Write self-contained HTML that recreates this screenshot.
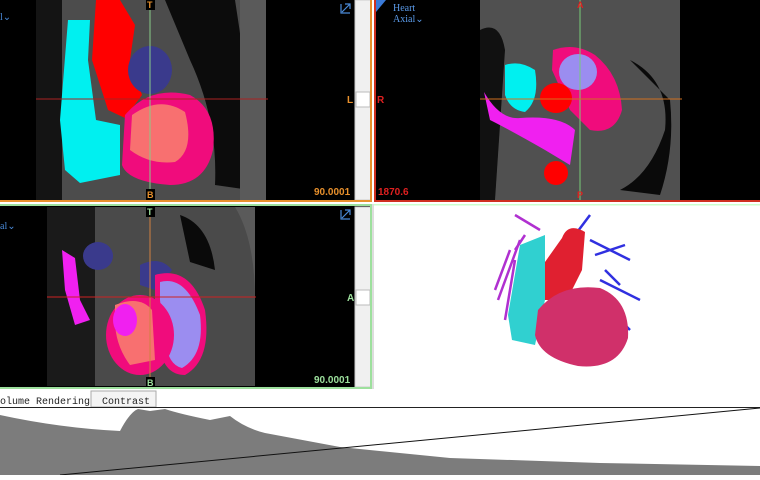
<!DOCTYPE html>
<html><head><style>
body{margin:0;width:760px;height:475px;overflow:hidden;background:#fff;font-family:"Liberation Sans",sans-serif}
</style></head><body>
<svg width="760" height="475" viewBox="0 0 760 475" xmlns="http://www.w3.org/2000/svg">
<!-- TOP LEFT -->
<rect x="0" y="0" width="372" height="202" fill="#000"/>
<path d="M36 0H265V200H36Z" fill="#4c4c4c"/>
<path d="M165 0H235Q245 60 248 120Q252 160 250 190L215 185Q218 120 190 60Z" fill="#0c0c0c"/>
<path d="M36 0H62V200H36Z" fill="#141414"/>
<rect x="240" y="0" width="26" height="200" fill="#5a5a5a"/>
<path d="M68 20H90L88 60L96 120L120 125L120 175L80 183L65 170L60 120Z" fill="#00f0f0"/>
<path d="M96 0H120L135 25L130 60L142 95L125 118L108 110L92 60Z" fill="#f00"/>
<ellipse cx="150" cy="70" rx="22" ry="24" fill="#3a3a8c"/>
<path d="M125 115Q150 85 190 95Q218 110 213 150Q205 185 170 185Q128 182 122 165Z" fill="#f00c7c"/>
<path d="M132 115Q160 95 185 112Q195 150 175 162Q150 165 130 150Z" fill="#f87070"/>
<line x1="150" y1="0" x2="150" y2="200" stroke="#8c8" stroke-width="1"/>
<line x1="36" y1="99" x2="268" y2="99" stroke="#a22" stroke-width="1"/>
<rect x="146" y="0" width="9" height="10" fill="#000"/><text x="147" y="8" font-size="9" font-weight="bold" fill="#e8902c">T</text>
<rect x="146" y="189" width="9" height="11" fill="#000"/><text x="147" y="198" font-size="9" font-weight="bold" fill="#e8902c">B</text>
<text x="347" y="103" font-size="10" font-weight="bold" fill="#e8902c">L</text>
<text x="314" y="195" font-size="10" font-weight="bold" fill="#e8902c">90.0001</text>
<text x="0" y="20" font-size="10" fill="#4a8ad8" font-family="Liberation Serif">l⌄</text>
<path d="M342 12L350 4M345 4H350V9M341 4V13H350" stroke="#4a8ad8" stroke-width="1.2" fill="none"/>
<rect x="355" y="0" width="16" height="200" fill="#f0f0f0" stroke="#ccc"/>
<rect x="356" y="92" width="14" height="15" fill="#fff" stroke="#bbb"/>
<rect x="0" y="200" width="372" height="2" fill="#e8902c"/>
<rect x="370" y="0" width="2" height="202" fill="#e8902c"/>
<!-- TOP RIGHT -->
<rect x="374" y="0" width="386" height="202" fill="#000"/>
<path d="M480 0H680V200H480Z" fill="#505050"/>
<path d="M630 60Q670 80 665 130Q650 175 620 190L660 195Q675 150 670 100Z" fill="#0a0a0a"/>
<path d="M480 30Q500 20 505 50L495 200H480Z" fill="#111"/>
<path d="M505 65Q520 60 535 70Q540 100 525 112Q510 110 505 95Z" fill="#00f0f0"/>
<path d="M553 50Q575 42 595 55Q620 75 622 110Q615 135 590 130L570 110L552 70Z" fill="#f00c7c"/>
<ellipse cx="578" cy="72" rx="19" ry="18" fill="#9b8df0"/>
<ellipse cx="556" cy="98" rx="16" ry="15" fill="#f00"/>
<path d="M484 92Q500 120 520 118Q560 115 575 130L570 165L545 150Q510 130 490 120Z" fill="#f020f0"/>
<circle cx="556" cy="173" r="12" fill="#f00"/>
<line x1="580" y1="0" x2="580" y2="200" stroke="#7c7" stroke-width="1"/>
<line x1="480" y1="99" x2="682" y2="99" stroke="#d07020" stroke-width="1"/>
<text x="577" y="8" font-size="9" font-weight="bold" fill="#e02020">A</text>
<text x="577" y="198" font-size="9" font-weight="bold" fill="#e02020">P</text>
<text x="377" y="103" font-size="10" font-weight="bold" fill="#e02020">R</text>
<text x="378" y="195" font-size="10" font-weight="bold" fill="#e02020">1870.6</text>
<path d="M376 0H386L376 12Z" fill="#3a7ad8"/>
<text x="393" y="11" font-size="10" fill="#5a9ae8" font-family="Liberation Serif">Heart</text>
<text x="393" y="22" font-size="10" fill="#5a9ae8" font-family="Liberation Serif">Axial⌄</text>
<rect x="374" y="0" width="2" height="202" fill="#d03020"/>
<rect x="374" y="200" width="386" height="2" fill="#d03020"/>
<!-- BOTTOM LEFT -->
<rect x="0" y="205" width="372" height="184" fill="#000"/>
<path d="M47 207H255V386H47Z" fill="#4a4a4a"/>
<path d="M47 207H95V386H47Z" fill="#1a1a1a"/>
<path d="M180 215Q210 225 215 270L190 262Z" fill="#0a0a0a"/>
<path d="M235 207Q255 240 255 300L255 207Z" fill="#5a5a5a"/>
<ellipse cx="98" cy="256" rx="15" ry="14" fill="#3a3a8c"/>
<path d="M62 250L75 258L80 300L90 320L75 325L65 290Z" fill="#f020f0"/>
<path d="M140 265Q160 255 172 270L155 290L140 285Z" fill="#3a3a8c"/>
<path d="M155 275Q190 265 205 310Q212 360 185 375Q165 375 160 350L155 300Z" fill="#f00c7c"/>
<path d="M160 282Q185 275 200 315Q205 355 182 368Q168 365 165 340L160 300Z" fill="#9b8df0"/>
<ellipse cx="140" cy="335" rx="34" ry="40" fill="#f00c7c"/>
<path d="M115 305Q140 295 152 310L155 360L130 365Q115 345 115 320Z" fill="#f87070"/>
<ellipse cx="125" cy="320" rx="12" ry="16" fill="#f020f0"/>
<line x1="150" y1="207" x2="150" y2="386" stroke="#d08040" stroke-width="1"/>
<line x1="47" y1="297" x2="256" y2="297" stroke="#c22" stroke-width="1"/>
<rect x="146" y="207" width="9" height="10" fill="#000"/><text x="147" y="215" font-size="9" font-weight="bold" fill="#9de09d">T</text>
<rect x="146" y="377" width="9" height="10" fill="#000"/><text x="147" y="386" font-size="9" font-weight="bold" fill="#9de09d">B</text>
<text x="347" y="301" font-size="10" font-weight="bold" fill="#9de09d">A</text>
<text x="314" y="383" font-size="10" font-weight="bold" fill="#9de09d">90.0001</text>
<text x="0" y="229" font-size="10" fill="#4a8ad8" font-family="Liberation Serif">al⌄</text>
<path d="M342 218L350 210M345 210H350V215M341 210V219H350" stroke="#4a8ad8" stroke-width="1.2" fill="none"/>
<rect x="355" y="207" width="16" height="180" fill="#f0f0f0" stroke="#ccc"/>
<rect x="356" y="290" width="14" height="15" fill="#fff" stroke="#bbb"/>
<rect x="0" y="204" width="372" height="2" fill="#9de09d"/>
<rect x="0" y="387" width="372" height="2" fill="#9de09d"/>
<rect x="370" y="204" width="2" height="185" fill="#9de09d"/>
<!-- BOTTOM RIGHT 3D -->
<rect x="374" y="204" width="386" height="185" fill="#fff"/>
<rect x="374" y="204" width="386" height="1.5" fill="#cfc"/>
<g stroke="#b030d0" stroke-width="2.5" fill="none">
<path d="M520 240L498 300M515 260L505 320M540 230L515 215M510 250L495 290M525 235L515 250"/>
</g>
<g stroke="#3030e0" stroke-width="2.5" fill="none">
<path d="M590 240L630 260M600 280L640 300M600 300L630 330M575 235L590 215M595 255L625 245M605 270L620 285"/>
</g>
<path d="M520 245L545 235L545 300L535 345L512 340L508 315Z" fill="#30d0d0"/>
<path d="M562 238Q568 222 585 232L582 270L572 290L555 300L545 300L545 262Z" fill="#e02030"/>
<path d="M538 310Q560 283 600 288Q630 300 628 338Q618 370 578 366Q540 358 535 335Z" fill="#d0306a"/>
<rect x="372" y="204" width="2" height="185" fill="#ddd"/>
<!-- TABS -->
<rect x="0" y="389" width="760" height="18" fill="#fff"/>
<text x="0" y="404" font-size="10" fill="#222" font-family="Liberation Mono">olume Rendering</text>
<rect x="91" y="391" width="65" height="16" fill="#f4f4f4" stroke="#aaa"/>
<text x="102" y="404" font-size="10" fill="#222" font-family="Liberation Mono">Contrast</text>
<!-- HISTOGRAM -->
<rect x="0" y="407" width="760" height="68" fill="#fff"/>
<path d="M0 415Q60 428 120 431Q130 412 138 409L150 411L165 409Q180 414 210 420L230 416Q245 428 265 433L340 447L450 458L600 463L760 466V475H0Z" fill="#7c7c7c"/>
<line x1="0" y1="407.5" x2="760" y2="407.5" stroke="#222"/>
<line x1="60" y1="475" x2="760" y2="408" stroke="#111" stroke-width="1"/>
</svg>
</body></html>
